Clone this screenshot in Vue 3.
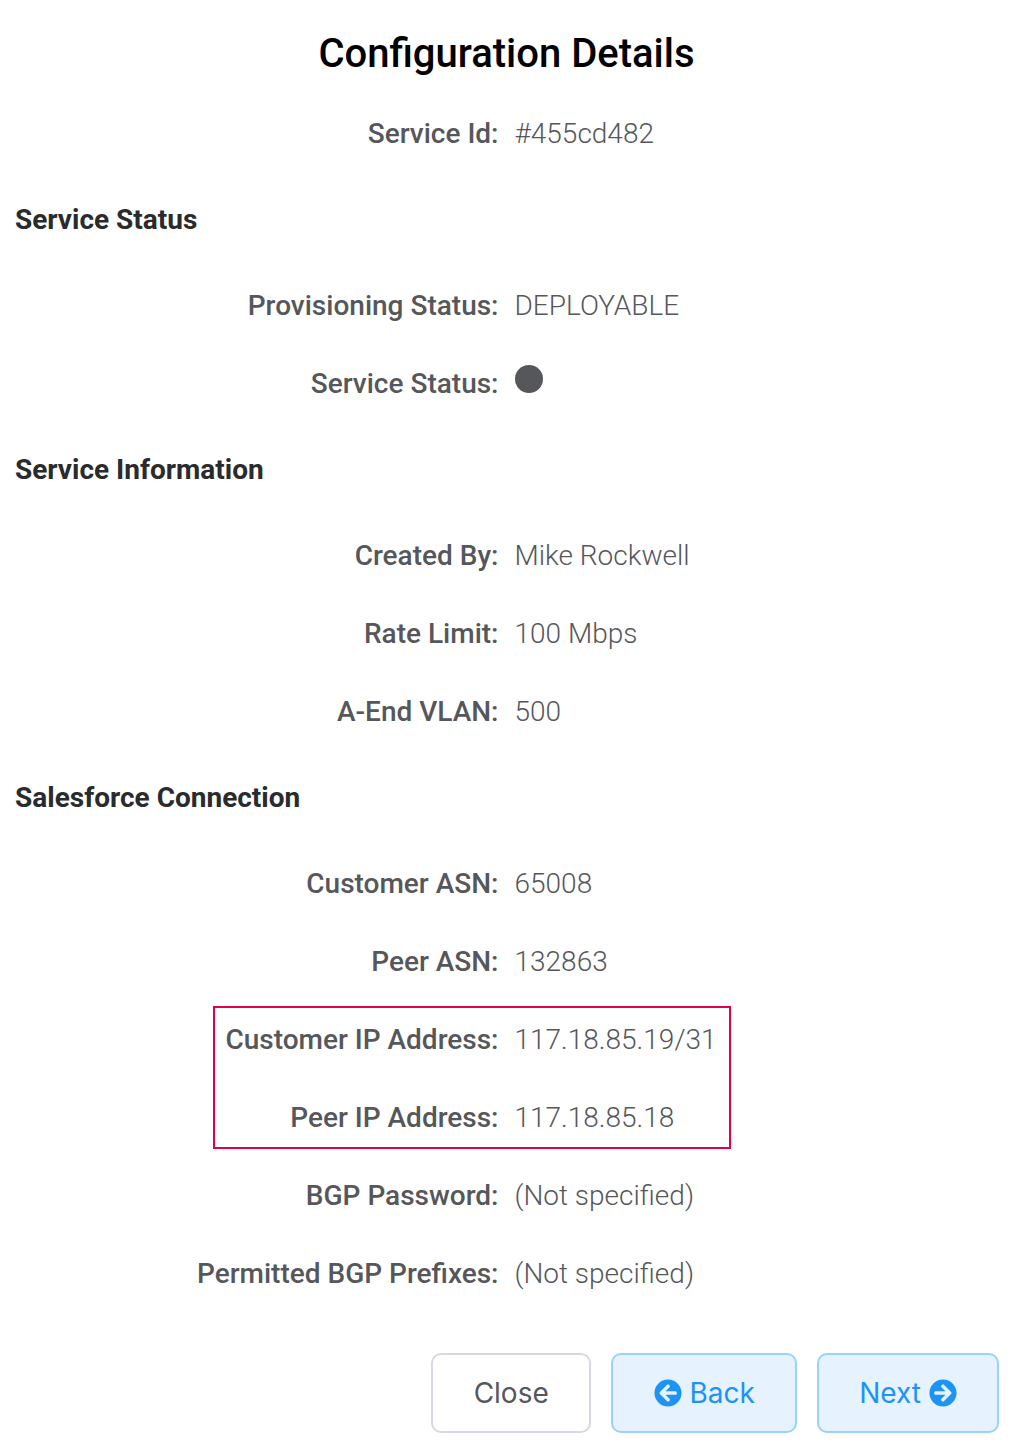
<script setup>
const service = [{ label: 'Service Id:', value: '#455cd482' }]
const sections = [
  {
    title: 'Service Status',
    groups: [
      { rows: [
        { label: 'Provisioning Status:', value: 'DEPLOYABLE' },
        { label: 'Service Status:', dot: true },
      ] },
    ],
  },
  {
    title: 'Service Information',
    groups: [
      { rows: [
        { label: 'Created By:', value: 'Mike Rockwell' },
        { label: 'Rate Limit:', value: '100 Mbps' },
        { label: 'A-End VLAN:', value: '500' },
      ] },
    ],
  },
  {
    title: 'Salesforce Connection',
    groups: [
      { rows: [
        { label: 'Customer ASN:', value: '65008' },
        { label: 'Peer ASN:', value: '132863' },
      ] },
      { marked: true, rows: [
        { label: 'Customer IP Address:', value: '117.18.85.19/31' },
        { label: 'Peer IP Address:', value: '117.18.85.18' },
      ] },
      { rows: [
        { label: 'BGP Password:', value: '(Not specified)' },
        { label: 'Permitted BGP Prefixes:', value: '(Not specified)' },
      ] },
    ],
  },
]
</script>

<template>
  <main class="details">
    <h1>Configuration Details</h1>
    <dl class="group">
      <div v-for="row in service" :key="row.label" class="row">
        <dt>{{ row.label }}</dt>
        <dd>{{ row.value }}</dd>
      </div>
    </dl>
    <section v-for="section in sections" :key="section.title">
      <h2>{{ section.title }}</h2>
      <dl v-for="(group, i) in section.groups" :key="i" class="group" :class="{ marked: group.marked }">
        <div v-for="row in group.rows" :key="row.label" class="row">
          <dt>{{ row.label }}</dt>
          <dd>
            <span v-if="row.dot" class="dot"></span>
            <template v-else>{{ row.value }}</template>
          </dd>
        </div>
      </dl>
    </section>
    <footer>
      <button type="button" class="close">Close</button>
      <button type="button" class="primary back">
        <svg viewBox="0 0 512 512" aria-hidden="true"><path d="M256 504C119 504 8 393 8 256S119 8 256 8s248 111 248 248-111 248-248 248zm28.900-143.600L209.400 288H392c13.300 0 24-10.700 24-24v-16c0-13.300-10.700-24-24-24H209.400l75.500-72.400c9.700-9.300 9.900-24.800.4-34.300l-11-10.900c-9.400-9.400-24.600-9.400-33.900 0L107.700 239c-9.400 9.400-9.400 24.600 0 33.900l132.700 132.700c9.400 9.400 24.600 9.400 33.900 0l11-10.900c9.500-9.500 9.300-25-.4-34.300z" /></svg>
        Back
      </button>
      <button type="button" class="primary next">
        Next
        <svg viewBox="0 0 512 512" aria-hidden="true"><path d="M256 8c137 0 248 111 248 248S393 504 256 504 8 393 8 256 119 8 256 8zm-28.900 143.600l75.500 72.400H120c-13.300 0-24 10.700-24 24v16c0 13.300 10.700 24 24 24h182.600l-75.500 72.400c-9.700 9.300-9.900 24.800-.4 34.300l11 10.900c9.400 9.400 24.600 9.400 33.900 0L404.300 273c9.400-9.400 9.400-24.600 0-33.900L271.600 106.300c-9.400-9.400-24.600-9.400-33.900 0l-11 10.900c-9.500 9.600-9.300 25.100.4 34.400z" /></svg>
      </button>
    </footer>
  </main>
</template>

<style>
body {
  margin: 0;
  background: #fff;
}
</style>

<style scoped>
.details {
  box-sizing: border-box;
  padding: 29px 14px 14px;
  font-family: Roboto, "Liberation Sans", sans-serif;
  font-size: 28px;
  line-height: 42px;
  color: #56575b;
}
h1 {
  margin: 0 0 16px;
  font-size: 40px;
  line-height: 50px;
  font-weight: 500;
  text-align: center;
  color: #000;
}
h2 {
  margin: 0;
  padding: 26px 1px;
  font-size: 28px;
  line-height: 42px;
  font-weight: 700;
  color: #2a2b2d;
}
.group {
  position: relative;
  margin: 0;
}
.row {
  display: grid;
  grid-template-columns: 1fr 1fr;
  column-gap: 16px;
  padding: 18px 0;
}
dt {
  font-weight: 500;
  text-align: right;
}
dd {
  margin: 0;
  font-weight: 300;
}
.dot {
  display: block;
  width: 28px;
  height: 28px;
  margin-top: 2px;
  border-radius: 50%;
  background: #56575b;
}
.marked::after {
  content: "";
  position: absolute;
  box-sizing: border-box;
  top: 5px;
  bottom: 8px;
  left: calc(50% - 294px);
  width: 518px;
  border: 2px solid #e0004d;
}
footer {
  display: flex;
  justify-content: flex-end;
  gap: 20px;
  margin-top: 40px;
}
button {
  display: flex;
  align-items: center;
  justify-content: center;
  gap: 8px;
  min-width: 160px;
  height: 80px;
  padding: 0 40px;
  border: 2px solid #d6d9e4;
  border-radius: 10px;
  background: #fff;
  color: #56575b;
  font-family: Inter, Roboto, sans-serif;
  font-size: 28px;
  font-weight: 400;
}
.primary {
  border-color: #9ad2fb;
  background: #e6f2fe;
  color: #1e93f6;
}
.back {
  min-width: 186px;
}
svg {
  width: 28px;
  height: 28px;
  fill: currentColor;
}
</style>
